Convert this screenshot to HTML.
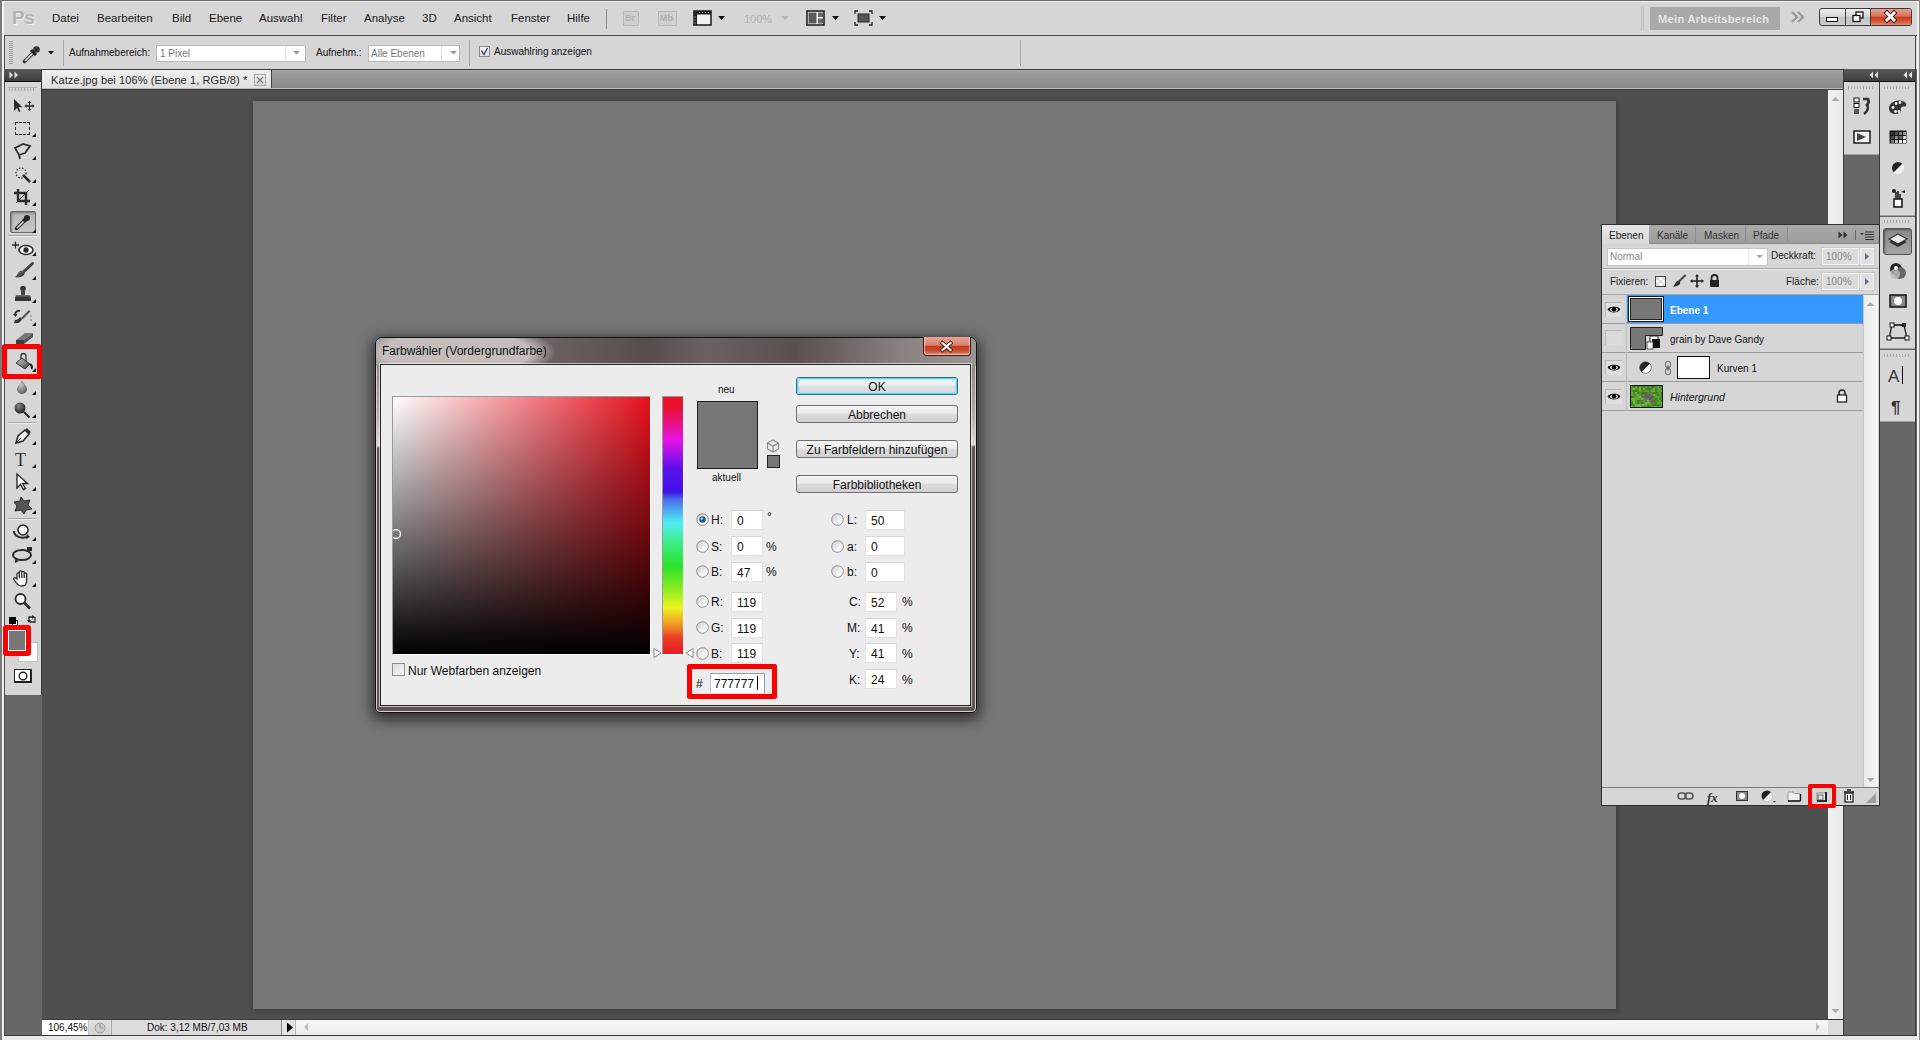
<!DOCTYPE html>
<html><head><meta charset="utf-8">
<style>
*{box-sizing:border-box;margin:0;padding:0}
html,body{width:1920px;height:1040px;overflow:hidden;background:#d6d6d6;font-family:"Liberation Sans",sans-serif;font-size:12px;color:#000}
.a{position:absolute}
.t{position:absolute;white-space:nowrap;line-height:1}
svg{overflow:visible}
</style></head><body>
<div class="a" style="left:0px;top:0px;width:1920px;height:1040px;background:#d6d6d6"></div>
<div class="a" style="left:0px;top:0px;width:1920px;height:1px;background:#6b6b6b"></div>
<div class="a" style="left:0px;top:1px;width:1920px;height:1px;background:#f0f0f0"></div>
<div class="a" style="left:0px;top:0px;width:2px;height:1040px;background:#7b7b7b"></div>
<div class="a" style="left:2px;top:1px;width:2px;height:1039px;background:#f2f2f2"></div>
<div class="a" style="left:1917px;top:1px;width:3px;height:1039px;background:#f0f0f0"></div>
<div class="a" style="left:1919px;top:0px;width:1px;height:1040px;background:#8a8a8a"></div>
<div class="t" style="left:12px;top:8px;font-size:19px;font-weight:bold;color:#b4b4b4;letter-spacing:-0.5px;text-shadow:1px 1px 0 #eee">Ps</div>
<div class="t" style="left:52px;top:13.27px;font-size:11.5px;color:#1a1a1a">Datei</div>
<div class="t" style="left:97px;top:13.27px;font-size:11.5px;color:#1a1a1a">Bearbeiten</div>
<div class="t" style="left:172px;top:13.27px;font-size:11.5px;color:#1a1a1a">Bild</div>
<div class="t" style="left:209px;top:13.27px;font-size:11.5px;color:#1a1a1a">Ebene</div>
<div class="t" style="left:259px;top:13.27px;font-size:11.5px;color:#1a1a1a">Auswahl</div>
<div class="t" style="left:321px;top:13.27px;font-size:11.5px;color:#1a1a1a">Filter</div>
<div class="t" style="left:364px;top:13.27px;font-size:11.5px;color:#1a1a1a">Analyse</div>
<div class="t" style="left:422px;top:13.27px;font-size:11.5px;color:#1a1a1a">3D</div>
<div class="t" style="left:454px;top:13.27px;font-size:11.5px;color:#1a1a1a">Ansicht</div>
<div class="t" style="left:511px;top:13.27px;font-size:11.5px;color:#1a1a1a">Fenster</div>
<div class="t" style="left:567px;top:13.27px;font-size:11.5px;color:#1a1a1a">Hilfe</div>
<div class="a" style="left:606px;top:9px;width:1px;height:20px;background:#8c8c8c"></div>
<div class="a" style="left:623px;top:11px;width:16px;height:15px;border:1px solid #b8b8b8;background:#d0d0d0;border-radius:1px"></div>
<div class="t" style="left:625px;top:14.38px;font-size:9px;color:#b0b0b0;font-weight:bold">Br</div>
<div class="a" style="left:658px;top:11px;width:19px;height:15px;border:1px solid #b8b8b8;background:#d0d0d0"></div>
<div class="t" style="left:660px;top:14.38px;font-size:9px;color:#b0b0b0;font-weight:bold">Mb</div>
<svg class="a" style="left:693px;top:10px;" width="34" height="16" viewBox="0 0 34 16"><rect x="1" y="1" width="17" height="14" fill="#f0f0f0" stroke="#222" stroke-width="1.6"/><rect x="1" y="1" width="17" height="3.5" fill="#222"/><rect x="1" y="1" width="3" height="14" fill="#222"/><path d="M6 2.5h1M9 2.5h1M12 2.5h1M15 2.5h1M2 6.5v1M2 9.5v1M2 12.5v1" stroke="#ddd"/><path d="M25 6h7l-3.5 4z" fill="#111"/></svg>
<div class="t" style="left:744px;top:13.69px;font-size:11px;color:#b0b0b0">100%</div>
<svg class="a" style="left:779px;top:10px;" width="12" height="16" viewBox="0 0 12 16"><path d="M2 6h8l-4 4z" fill="#b4b4b4"/></svg>
<svg class="a" style="left:806px;top:10px;" width="34" height="16" viewBox="0 0 34 16"><rect x="1" y="1" width="17" height="14" fill="#f4f4f4" stroke="#222" stroke-width="1.6"/><rect x="2.5" y="2.5" width="8" height="11" fill="#5a5a5a"/><rect x="12" y="2.5" width="5" height="4.5" fill="#666"/><rect x="12" y="8.5" width="5" height="5" fill="#666"/><path d="M26 6h7l-3.5 4z" fill="#111"/></svg>
<svg class="a" style="left:854px;top:10px;" width="34" height="16" viewBox="0 0 34 16"><path d="M1 4V1h3M15 1h3v3M18 12v3h-3M4 15H1v-3" fill="none" stroke="#222" stroke-width="1.3"/><rect x="4" y="4" width="11" height="8" fill="#555" stroke="#222"/><path d="M25 6h7l-3.5 4z" fill="#111"/></svg>
<div class="a" style="left:1641px;top:7px;width:1px;height:24px;background:#bdbdbd"></div>
<div class="a" style="left:1643px;top:7px;width:1px;height:24px;background:#bdbdbd"></div>
<div class="a" style="left:1650px;top:7px;width:130px;height:23px;background:#a9a9a9;border-radius:1px"></div>
<div class="t" style="left:1658px;top:13.69px;font-size:11px;color:#e6e6e6;font-weight:bold;letter-spacing:0.35px">Mein Arbeitsbereich</div>
<svg class="a" style="left:1790px;top:10px;" width="16" height="14" viewBox="0 0 16 14"><path d="M2 2l5 5-5 5M8 2l5 5-5 5" fill="none" stroke="#9a9a9a" stroke-width="2.2"/></svg>
<div class="a" style="left:1819px;top:8px;width:93px;height:18px;border:1px solid #3a3a3a;border-radius:3px;background:linear-gradient(#eeeeee,#d6d6d6 48%,#c2c2c2 52%,#cdcdcd);overflow:hidden"><div class="a" style="left:50px;top:0;width:42px;height:16px;background:linear-gradient(#e9a092,#d9705c 45%,#c93d1f 52%,#d95a3c 80%,#e58873);border-left:1px solid #3a3a3a"></div><div class="a" style="left:25px;top:0;width:1px;height:16px;background:#3a3a3a"></div></div>
<div class="a" style="left:1826px;top:17px;width:12px;height:5px;border:1.5px solid #111;background:#fff"></div>
<svg class="a" style="left:1851px;top:11px;" width="14" height="12" viewBox="0 0 14 12"><rect x="5" y="1" width="7" height="6" fill="#fff" stroke="#111" stroke-width="1.3"/><rect x="2" y="4.5" width="7" height="6" fill="#fff" stroke="#111" stroke-width="1.3"/></svg>
<svg class="a" style="left:1883px;top:10px;" width="16" height="14" viewBox="0 0 16 14"><path d="M4 3l7 7M11 3l-7 7" stroke="#4a1c14" stroke-width="5" stroke-linecap="square"/><path d="M4 3l7 7M11 3l-7 7" stroke="#fff" stroke-width="3" stroke-linecap="square"/></svg>
<div class="a" style="left:4px;top:35px;width:1913px;height:1px;background:#4a4a4a"></div>
<div class="a" style="left:4px;top:35px;width:1px;height:34px;background:#4a4a4a"></div>
<div class="a" style="left:1915px;top:35px;width:1px;height:34px;background:#4a4a4a"></div>
<div class="a" style="left:5px;top:36px;width:1910px;height:33px;background:#d6d6d6"></div>
<div class="a" style="left:9px;top:41px;width:4px;height:24px;background:repeating-linear-gradient(#9a9a9a 0 1px,transparent 1px 2px)"></div>
<svg class="a" style="left:22px;top:42px;" width="34" height="22" viewBox="0 0 34 22"><path d="M2.5 19.5l9-9" stroke="#333" stroke-width="3.6" stroke-linecap="round"/><path d="M3 19l8.2-8.2" stroke="#eee" stroke-width="1.6"/><path d="M9 8l5 5" stroke="#222" stroke-width="3"/><circle cx="14.5" cy="7.5" r="3.3" fill="#333"/><path d="M26 9h6l-3 3.5z" fill="#111"/></svg>
<div class="a" style="left:63px;top:40px;width:1px;height:26px;background:#a6a6a6"></div>
<div class="t" style="left:69px;top:47.53px;font-size:10px;color:#111">Aufnahmebereich:</div>
<div class="a" style="left:156px;top:45px;width:150px;height:17px;background:#fff;border:1px solid #b9b9b9"></div>
<div class="a" style="left:157px;top:46px;width:129px;height:15px;border-right:1px solid #e2e2e2"></div>
<div class="t" style="left:160px;top:48.53px;font-size:10px;color:#777">1 Pixel</div>
<svg class="a" style="left:292px;top:50px;" width="10" height="6" viewBox="0 0 10 6"><path d="M1 1h7l-3.5 3.5z" fill="#999"/></svg>
<div class="t" style="left:316px;top:47.53px;font-size:10px;color:#111">Aufnehm.:</div>
<div class="a" style="left:368px;top:45px;width:92px;height:17px;background:#fff;border:1px solid #b9b9b9"></div>
<div class="a" style="left:369px;top:46px;width:73px;height:15px;border-right:1px solid #e2e2e2"></div>
<div class="t" style="left:371px;top:48.53px;font-size:10px;color:#777">Alle Ebenen</div>
<svg class="a" style="left:449px;top:50px;" width="10" height="6" viewBox="0 0 10 6"><path d="M1 1h7l-3.5 3.5z" fill="#999"/></svg>
<div class="a" style="left:469px;top:40px;width:1px;height:26px;background:#a6a6a6"></div>
<div class="a" style="left:479px;top:46px;width:11px;height:11px;background:linear-gradient(#f4f4f4,#e0e0e0);border:1px solid #8a8a8a"></div>
<svg class="a" style="left:480px;top:47px;" width="9" height="9" viewBox="0 0 9 9"><path d="M1.5 3.5l2.5 4 3.5-6.5" fill="none" stroke="#2b3a7a" stroke-width="1.3"/></svg>
<div class="t" style="left:494px;top:46.53px;font-size:10px;color:#111">Auswahlring anzeigen</div>
<div class="a" style="left:1020px;top:40px;width:1px;height:26px;background:#a6a6a6"></div>
<div class="a" style="left:4px;top:69px;width:38px;height:626px;background:#d6d6d6;border-left:1px solid #4a4a4a;border-right:1px solid #3a3a3a"></div>
<div class="a" style="left:4px;top:695px;width:38px;height:340px;background:#676767;border-left:1px solid #4a4a4a"></div>
<div class="a" style="left:4px;top:69px;width:37px;height:12px;background:linear-gradient(#5a5a5a,#3e3e3e)"></div>
<div class="a" style="left:4px;top:81px;width:37px;height:1px;background:#0d0d0d"></div>
<svg class="a" style="left:9px;top:71px;" width="14" height="8" viewBox="0 0 14 8"><path d="M0.5 0.5l3.5 3.5-3.5 3.5zM5.5 0.5l3.5 3.5-3.5 3.5z" fill="#e0e0e0"/></svg>
<div class="a" style="left:8px;top:87px;width:29px;height:1px;background:#b0b0b0"></div>
<div class="a" style="left:9px;top:88px;width:26px;height:3px;background:repeating-linear-gradient(90deg,#a6a6a6 0 1px,transparent 1px 3px)"></div>
<div class="a" style="left:42px;top:69px;width:1801px;height:951px;background:#4f4f4f"></div>
<div class="a" style="left:42px;top:69px;width:1801px;height:20px;background:linear-gradient(#a6a6a6,#9a9a9a 30%,#888888)"></div>
<div class="a" style="left:42px;top:69px;width:1801px;height:1px;background:#3d3d3d"></div>
<div class="a" style="left:42px;top:70px;width:230px;height:19px;background:linear-gradient(#f0f0f0,#dedede);border-right:1px solid #3e3e3e"></div>
<div class="t" style="left:51px;top:74.69px;font-size:11px;color:#2b2b2b;letter-spacing:0.1px">Katze.jpg bei 106% (Ebene 1, RGB/8) *</div>
<div class="a" style="left:254px;top:74px;width:12px;height:12px;border:1px solid #aaa;background:linear-gradient(#eee,#d8d8d8)"></div>
<svg class="a" style="left:256px;top:76px;" width="8" height="8" viewBox="0 0 8 8"><path d="M1 1l6 6M7 1l-6 6" stroke="#777" stroke-width="1.2"/></svg>
<div class="a" style="left:42px;top:88px;width:1801px;height:1px;background:#b8b8b8"></div>
<div class="a" style="left:42px;top:89px;width:1801px;height:1px;background:#3a3a3a"></div>
<div class="a" style="left:253px;top:101px;width:1363px;height:908px;background:#777777;box-shadow:2px 2px 0 #434343,4px 4px 0 #474747,1px 1px 6px rgba(0,0,0,0.3)"></div>
<div class="a" style="left:1828px;top:90px;width:15px;height:930px;background:linear-gradient(90deg,#f2f2f2,#e9e9e9)"></div>
<svg class="a" style="left:1831px;top:96px;" width="9" height="6" viewBox="0 0 9 6"><path d="M0.5 5l4-4 4 4z" fill="#a8a8a8"/></svg>
<svg class="a" style="left:1831px;top:1008px;" width="9" height="6" viewBox="0 0 9 6"><path d="M0.5 1l4 4 4-4z" fill="#a8a8a8"/></svg>
<div class="a" style="left:42px;top:1019px;width:1801px;height:1px;background:#3a3a3a"></div>
<div class="a" style="left:42px;top:1020px;width:1801px;height:15px;background:linear-gradient(#f7f7f7,#ebebeb)"></div>
<div class="a" style="left:42px;top:1020px;width:46px;height:15px;background:#fff"></div>
<div class="t" style="left:48px;top:1022.53px;font-size:10px;color:#111">106,45%</div>
<div class="a" style="left:88px;top:1020px;width:24px;height:15px;background:linear-gradient(#e0e0e0,#d4d4d4);border-left:1px solid #c8c8c8;border-right:1px solid #aaa"></div>
<svg class="a" style="left:94px;top:1022px;" width="12" height="12" viewBox="0 0 12 12"><circle cx="6" cy="6" r="5" fill="#cfcfcf" stroke="#9a9a9a"/><path d="M6 2v4h4" fill="none" stroke="#9a9a9a" stroke-width="1.2"/></svg>
<div class="a" style="left:112px;top:1020px;width:170px;height:15px;background:#dcdcdc;border-right:1px solid #8a8a8a"></div>
<div class="t" style="left:147px;top:1022.53px;font-size:10px;color:#111">Dok: 3,12 MB/7,03 MB</div>
<div class="a" style="left:282px;top:1020px;width:14px;height:15px;background:#e4e4e4;border-right:1px solid #bbb"></div>
<svg class="a" style="left:286px;top:1022px;" width="8" height="11" viewBox="0 0 8 11"><path d="M1 0.5l6 5-6 5z" fill="#000"/></svg>
<svg class="a" style="left:302px;top:1022px;" width="8" height="10" viewBox="0 0 8 10"><path d="M6 1l-4 4 4 4z" fill="#bbb"/></svg>
<svg class="a" style="left:1814px;top:1022px;" width="8" height="10" viewBox="0 0 8 10"><path d="M2 1l4 4-4 4z" fill="#bbb"/></svg>
<div class="a" style="left:1828px;top:1020px;width:15px;height:15px;background:#dcdcdc"></div>
<div class="a" style="left:42px;top:1035px;width:1801px;height:1px;background:#3a3a3a"></div>
<div class="a" style="left:4px;top:1035px;width:1913px;height:1px;background:#3a3a3a"></div>
<div class="a" style="left:4px;top:1036px;width:1913px;height:4px;background:#e8e8e8"></div>
<div class="a" style="left:1843px;top:69px;width:74px;height:966px;background:#676767"></div>
<div class="a" style="left:1843px;top:69px;width:1px;height:966px;background:#3a3a3a"></div>
<div class="a" style="left:1844px;top:69px;width:72px;height:12px;background:linear-gradient(#5a5a5a,#3e3e3e)"></div>
<div class="a" style="left:1844px;top:81px;width:72px;height:1px;background:#0d0d0d"></div>
<svg class="a" style="left:1869px;top:71px;" width="10" height="8" viewBox="0 0 10 8"><path d="M4 0.5l-3.5 3.5 3.5 3.5zM9 0.5l-3.5 3.5 3.5 3.5z" fill="#e0e0e0"/></svg>
<svg class="a" style="left:1903px;top:71px;" width="10" height="8" viewBox="0 0 10 8"><path d="M4 0.5l-3.5 3.5 3.5 3.5zM9 0.5l-3.5 3.5 3.5 3.5z" fill="#e0e0e0"/></svg>
<div class="a" style="left:1879px;top:82px;width:1px;height:723px;background:#3a3a3a"></div>
<div class="a" style="left:1915px;top:69px;width:1px;height:966px;background:#3a3a3a"></div>
<div class="a" style="left:1844px;top:82px;width:35px;height:73px;background:#d6d6d6;border-bottom:1px solid #a0a0a0"></div>
<div class="a" style="left:1880px;top:82px;width:35px;height:134px;background:#d6d6d6;border-bottom:1px solid #a0a0a0"></div>
<div class="a" style="left:1880px;top:217px;width:35px;height:132px;background:#d6d6d6;border-bottom:1px solid #a0a0a0"></div>
<div class="a" style="left:1880px;top:350px;width:35px;height:72px;background:#d6d6d6;border-bottom:1px solid #a0a0a0"></div>
<div class="a" style="left:1848px;top:86px;width:27px;height:3px;background:repeating-linear-gradient(90deg,#a6a6a6 0 1px,transparent 1px 3px)"></div>
<div class="a" style="left:1884px;top:86px;width:27px;height:3px;background:repeating-linear-gradient(90deg,#a6a6a6 0 1px,transparent 1px 3px)"></div>
<div class="a" style="left:1884px;top:220px;width:27px;height:3px;background:repeating-linear-gradient(90deg,#a6a6a6 0 1px,transparent 1px 3px)"></div>
<div class="a" style="left:1884px;top:354px;width:27px;height:3px;background:repeating-linear-gradient(90deg,#a6a6a6 0 1px,transparent 1px 3px)"></div>
<div class="a" style="left:1601px;top:224px;width:279px;height:582px;background:#d6d6d6;border:1px solid #2e2e2e"></div>
<div class="a" style="left:1602px;top:225px;width:277px;height:19px;background:linear-gradient(#a9a9a9,#9c9c9c)"></div>
<div class="a" style="left:1602px;top:243px;width:277px;height:1px;background:#8a8a8a"></div>
<div class="a" style="left:1602px;top:225px;width:47px;height:19px;background:linear-gradient(#e6e6e6,#dadada)"></div>
<div class="t" style="left:1609px;top:230.53px;font-size:10px;color:#222">Ebenen</div>
<div class="t" style="left:1657px;top:230.53px;font-size:10px;color:#333">Kanäle</div>
<div class="a" style="left:1695px;top:227px;width:1px;height:15px;background:#8e8e8e"></div>
<div class="t" style="left:1704px;top:230.53px;font-size:10px;color:#333">Masken</div>
<div class="a" style="left:1745px;top:227px;width:1px;height:15px;background:#8e8e8e"></div>
<div class="t" style="left:1753px;top:230.53px;font-size:10px;color:#333">Pfade</div>
<div class="a" style="left:1787px;top:227px;width:1px;height:15px;background:#8e8e8e"></div>
<svg class="a" style="left:1838px;top:231px;" width="11" height="8" viewBox="0 0 11 8"><path d="M0.5 0.5l4 3.5-4 3.5zM5.5 0.5l4 3.5-4 3.5z" fill="#333"/></svg>
<div class="a" style="left:1855px;top:230px;width:1px;height:10px;background:#666"></div>
<svg class="a" style="left:1859px;top:230px;" width="16" height="10" viewBox="0 0 16 10"><path d="M1 3h4l-2 2.5z" fill="#444"/><path d="M6 2h9M6 4.5h9M6 7h9M6 9.5h9" stroke="#333" stroke-width="1"/></svg>
<div class="a" style="left:1607px;top:248px;width:161px;height:18px;background:#fff;border:1px solid #c4c4c4"></div>
<div class="a" style="left:1608px;top:249px;width:141px;height:16px;border-right:1px solid #e6e6e6"></div>
<div class="t" style="left:1610px;top:251.53px;font-size:10px;color:#888">Normal</div>
<svg class="a" style="left:1755px;top:254px;" width="10" height="6" viewBox="0 0 10 6"><path d="M1 1h7l-3.5 3.5z" fill="#aaa"/></svg>
<div class="t" style="left:1771px;top:250.53px;font-size:10px;color:#222">Deckkraft:</div>
<div class="a" style="left:1822px;top:248px;width:37px;height:17px;background:#dcdcdc;border:1px solid #f4f4f4;outline:1px solid #c8c8c8"></div>
<div class="t" style="left:1826px;top:251.53px;font-size:10px;color:#888">100%</div>
<div class="a" style="left:1860px;top:248px;width:14px;height:17px;background:#e0e0e0;border:1px solid #f4f4f4;outline:1px solid #c8c8c8"></div>
<svg class="a" style="left:1863px;top:252px;" width="8" height="9" viewBox="0 0 8 9"><path d="M2 1l4 3.5-4 3.5z" fill="#6a6a8a"/></svg>
<div class="a" style="left:1602px;top:268px;width:277px;height:1px;background:#a8a8a8"></div>
<div class="a" style="left:1602px;top:269px;width:277px;height:1px;background:#ececec"></div>
<div class="t" style="left:1610px;top:276.54px;font-size:10px;color:#222">Fixieren:</div>
<div class="a" style="left:1655px;top:276px;width:11px;height:11px;border:1px solid #444;background:conic-gradient(#fff 25%,#ddd 0 50%,#fff 0 75%,#ddd 0) 0 0/6px 6px"></div>
<svg class="a" style="left:1672px;top:274px;" width="14" height="14" viewBox="0 0 14 14"><path d="M13 1.5l-6 6" stroke="#444" stroke-width="2" stroke-linecap="round"/><path d="M7 7c1.5 1 1.5 2.5 0.5 3.5-1.5 1.5-4.5 2.5-6.5 2 1-1 1.5-2 2.5-3.5 1-1.5 2.5-2.5 3.5-2z" fill="#333"/></svg>
<svg class="a" style="left:1690px;top:274px;" width="14" height="14" viewBox="0 0 14 14"><path d="M7 1v12M1 7h12" stroke="#222" stroke-width="1.6"/><path d="M7 0l-2 2.5h4zM7 14l-2-2.5h4zM0 7l2.5-2v4zM14 7l-2.5-2v4z" fill="#222"/></svg>
<svg class="a" style="left:1709px;top:274px;" width="11" height="13" viewBox="0 0 11 13"><path d="M2.5 6V4a3 3 0 0 1 6 0v2" fill="none" stroke="#222" stroke-width="1.8"/><rect x="1" y="6" width="9" height="7" fill="#222"/></svg>
<div class="t" style="left:1786px;top:276.54px;font-size:10px;color:#222">Fläche:</div>
<div class="a" style="left:1822px;top:273px;width:37px;height:17px;background:#dcdcdc;border:1px solid #f4f4f4;outline:1px solid #c8c8c8"></div>
<div class="t" style="left:1826px;top:276.54px;font-size:10px;color:#888">100%</div>
<div class="a" style="left:1860px;top:273px;width:14px;height:17px;background:#e0e0e0;border:1px solid #f4f4f4;outline:1px solid #c8c8c8"></div>
<svg class="a" style="left:1863px;top:277px;" width="8" height="9" viewBox="0 0 8 9"><path d="M2 1l4 3.5-4 3.5z" fill="#6a6a8a"/></svg>
<div class="a" style="left:1602px;top:294px;width:277px;height:1px;background:#a8a8a8"></div>
<div class="a" style="left:1602px;top:295px;width:261px;height:493px;background:#d6d6d6"></div>
<div class="a" style="left:1602px;top:323px;width:261px;height:1px;background:#9c9c9c"></div>
<div class="a" style="left:1602px;top:352px;width:261px;height:1px;background:#9c9c9c"></div>
<div class="a" style="left:1602px;top:381px;width:261px;height:1px;background:#9c9c9c"></div>
<div class="a" style="left:1602px;top:410px;width:261px;height:1px;background:#9c9c9c"></div>
<div class="a" style="left:1626px;top:295px;width:1px;height:116px;background:#bcbcbc"></div>
<div class="a" style="left:1627px;top:295px;width:236px;height:28px;background:#3399ff"></div>
<div class="a" style="left:1605px;top:302px;width:17px;height:15px;border-top:1px solid #b8b8b8;border-left:1px solid #b8b8b8;background:#dedede"></div>
<svg class="a" style="left:1607px;top:305px;" width="14" height="9" viewBox="0 0 14 9"><path d="M0.5 4.5C3 0.5 11 0.5 13.5 4.5C11 8.5 3 8.5 0.5 4.5z" fill="#111"/><ellipse cx="7" cy="4.3" rx="3.8" ry="2.6" fill="#fff"/><circle cx="7" cy="4.5" r="2.3" fill="#000"/><path d="M1 4.5C3.5 1.8 10.5 1.8 13 4.5" stroke="#111" fill="none"/></svg>
<div class="a" style="left:1628px;top:296px;width:36px;height:26px;background:#fff;border:1px solid #0a1a30"></div>
<div class="a" style="left:1630px;top:298px;width:32px;height:22px;background:#777;border:1px solid #222"></div>
<div class="t" style="left:1670px;top:305.54px;font-size:10px;color:#fff;font-weight:bold">Ebene 1</div>
<div class="a" style="left:1605px;top:330px;width:17px;height:15px;border-top:1px solid #b8b8b8;border-left:1px solid #b8b8b8;background:#dadada"></div>
<svg class="a" style="left:1630px;top:327px;" width="34" height="23" viewBox="0 0 34 23"><path d="M0.5 0.5h32v8h-17v14h-15z" fill="#777" stroke="#222"/><rect x="20" y="9" width="8" height="11" fill="#fff" stroke="#222"/><rect x="22" y="12" width="8" height="9" fill="#111"/><rect x="17" y="15" width="6" height="7" fill="#fff" stroke="#333" stroke-width="0.8"/></svg>
<div class="t" style="left:1670px;top:334.54px;font-size:10px;color:#111">grain by Dave Gandy</div>
<div class="a" style="left:1605px;top:360px;width:17px;height:15px;border-top:1px solid #b8b8b8;border-left:1px solid #b8b8b8;background:#dedede"></div>
<svg class="a" style="left:1607px;top:363px;" width="14" height="9" viewBox="0 0 14 9"><path d="M0.5 4.5C3 0.5 11 0.5 13.5 4.5C11 8.5 3 8.5 0.5 4.5z" fill="#111"/><ellipse cx="7" cy="4.3" rx="3.8" ry="2.6" fill="#fff"/><circle cx="7" cy="4.5" r="2.3" fill="#000"/><path d="M1 4.5C3.5 1.8 10.5 1.8 13 4.5" stroke="#111" fill="none"/></svg>
<svg class="a" style="left:1639px;top:361px;" width="13" height="13" viewBox="0 0 13 13"><circle cx="6.5" cy="6.5" r="5.8" fill="#222"/><path d="M11 2.5L2.5 11A5.8 5.8 0 0 0 11 2.5z" fill="#fff"/><circle cx="6.5" cy="6.5" r="5.8" fill="none" stroke="#555" stroke-width="0.8"/></svg>
<svg class="a" style="left:1664px;top:361px;" width="8" height="14" viewBox="0 0 8 14"><rect x="1.5" y="0.5" width="5" height="6" rx="2" fill="none" stroke="#555"/><rect x="1.5" y="7.5" width="5" height="6" rx="2" fill="none" stroke="#555"/><path d="M4 4v6" stroke="#555"/></svg>
<div class="a" style="left:1677px;top:356px;width:33px;height:23px;background:#fff;border:1px solid #111"></div>
<div class="t" style="left:1717px;top:363.54px;font-size:10px;color:#111">Kurven 1</div>
<div class="a" style="left:1605px;top:389px;width:17px;height:15px;border-top:1px solid #b8b8b8;border-left:1px solid #b8b8b8;background:#dedede"></div>
<svg class="a" style="left:1607px;top:392px;" width="14" height="9" viewBox="0 0 14 9"><path d="M0.5 4.5C3 0.5 11 0.5 13.5 4.5C11 8.5 3 8.5 0.5 4.5z" fill="#111"/><ellipse cx="7" cy="4.3" rx="3.8" ry="2.6" fill="#fff"/><circle cx="7" cy="4.5" r="2.3" fill="#000"/><path d="M1 4.5C3.5 1.8 10.5 1.8 13 4.5" stroke="#111" fill="none"/></svg>
<div class="a" style="left:1630px;top:385px;width:33px;height:23px;border:1px solid #111;overflow:hidden"><svg style="position:absolute;left:0;top:0" width="31" height="21"><rect x="0" y="0" width="2" height="2" fill="rgb(76,142,39)"/><rect x="2" y="0" width="2" height="2" fill="rgb(67,130,34)"/><rect x="4" y="0" width="2" height="2" fill="rgb(92,165,49)"/><rect x="6" y="0" width="2" height="2" fill="rgb(63,125,32)"/><rect x="8" y="0" width="2" height="2" fill="rgb(86,157,46)"/><rect x="10" y="0" width="2" height="2" fill="rgb(78,145,40)"/><rect x="12" y="0" width="2" height="2" fill="rgb(62,124,31)"/><rect x="14" y="0" width="2" height="2" fill="rgb(85,155,45)"/><rect x="16" y="0" width="2" height="2" fill="rgb(61,122,31)"/><rect x="18" y="0" width="2" height="2" fill="rgb(81,150,43)"/><rect x="20" y="0" width="2" height="2" fill="rgb(63,124,32)"/><rect x="22" y="0" width="2" height="2" fill="rgb(64,126,32)"/><rect x="24" y="0" width="2" height="2" fill="rgb(81,149,42)"/><rect x="26" y="0" width="2" height="2" fill="rgb(101,177,54)"/><rect x="28" y="0" width="2" height="2" fill="rgb(66,128,33)"/><rect x="30" y="0" width="2" height="2" fill="rgb(71,135,36)"/><rect x="0" y="2" width="2" height="2" fill="rgb(91,163,48)"/><rect x="2" y="2" width="2" height="2" fill="rgb(107,186,58)"/><rect x="4" y="2" width="2" height="2" fill="rgb(88,160,47)"/><rect x="6" y="2" width="2" height="2" fill="rgb(79,147,41)"/><rect x="8" y="2" width="2" height="2" fill="rgb(108,188,59)"/><rect x="10" y="2" width="2" height="2" fill="rgb(62,123,31)"/><rect x="12" y="2" width="2" height="2" fill="rgb(102,180,55)"/><rect x="14" y="2" width="2" height="2" fill="rgb(74,140,38)"/><rect x="16" y="2" width="2" height="2" fill="rgb(67,130,34)"/><rect x="18" y="2" width="2" height="2" fill="rgb(65,128,33)"/><rect x="20" y="2" width="2" height="2" fill="rgb(75,141,39)"/><rect x="22" y="2" width="2" height="2" fill="rgb(100,177,54)"/><rect x="24" y="2" width="2" height="2" fill="rgb(69,132,35)"/><rect x="26" y="2" width="2" height="2" fill="rgb(89,160,47)"/><rect x="28" y="2" width="2" height="2" fill="rgb(91,164,49)"/><rect x="30" y="2" width="2" height="2" fill="rgb(78,146,41)"/><rect x="0" y="4" width="2" height="2" fill="rgb(87,158,46)"/><rect x="2" y="4" width="2" height="2" fill="rgb(63,124,31)"/><rect x="4" y="4" width="2" height="2" fill="rgb(62,124,31)"/><rect x="6" y="4" width="2" height="2" fill="rgb(70,134,36)"/><rect x="8" y="4" width="2" height="2" fill="rgb(94,167,50)"/><rect x="10" y="4" width="2" height="2" fill="rgb(81,149,42)"/><rect x="12" y="4" width="2" height="2" fill="rgb(75,141,39)"/><rect x="14" y="4" width="2" height="2" fill="rgb(89,160,47)"/><rect x="16" y="4" width="2" height="2" fill="rgb(82,151,43)"/><rect x="18" y="4" width="2" height="2" fill="rgb(74,140,38)"/><rect x="20" y="4" width="2" height="2" fill="rgb(99,175,53)"/><rect x="22" y="4" width="2" height="2" fill="rgb(94,168,50)"/><rect x="24" y="4" width="2" height="2" fill="rgb(72,137,37)"/><rect x="26" y="4" width="2" height="2" fill="rgb(88,160,47)"/><rect x="28" y="4" width="2" height="2" fill="rgb(86,156,45)"/><rect x="30" y="4" width="2" height="2" fill="rgb(103,181,56)"/><rect x="0" y="6" width="2" height="2" fill="rgb(96,171,51)"/><rect x="2" y="6" width="2" height="2" fill="rgb(74,140,38)"/><rect x="4" y="6" width="2" height="2" fill="rgb(109,188,59)"/><rect x="6" y="6" width="2" height="2" fill="rgb(65,128,33)"/><rect x="8" y="6" width="2" height="2" fill="rgb(80,149,42)"/><rect x="10" y="6" width="2" height="2" fill="rgb(67,130,34)"/><rect x="12" y="6" width="2" height="2" fill="rgb(97,89,83)"/><rect x="14" y="6" width="2" height="2" fill="rgb(63,125,32)"/><rect x="16" y="6" width="2" height="2" fill="rgb(115,107,101)"/><rect x="18" y="6" width="2" height="2" fill="rgb(117,109,103)"/><rect x="20" y="6" width="2" height="2" fill="rgb(124,116,110)"/><rect x="22" y="6" width="2" height="2" fill="rgb(63,124,32)"/><rect x="24" y="6" width="2" height="2" fill="rgb(64,126,32)"/><rect x="26" y="6" width="2" height="2" fill="rgb(73,138,38)"/><rect x="28" y="6" width="2" height="2" fill="rgb(94,168,50)"/><rect x="30" y="6" width="2" height="2" fill="rgb(63,124,31)"/><rect x="0" y="8" width="2" height="2" fill="rgb(96,171,51)"/><rect x="2" y="8" width="2" height="2" fill="rgb(75,141,39)"/><rect x="4" y="8" width="2" height="2" fill="rgb(88,160,47)"/><rect x="6" y="8" width="2" height="2" fill="rgb(94,167,50)"/><rect x="8" y="8" width="2" height="2" fill="rgb(82,151,43)"/><rect x="10" y="8" width="2" height="2" fill="rgb(117,109,103)"/><rect x="12" y="8" width="2" height="2" fill="rgb(124,116,110)"/><rect x="14" y="8" width="2" height="2" fill="rgb(102,94,88)"/><rect x="16" y="8" width="2" height="2" fill="rgb(108,100,94)"/><rect x="18" y="8" width="2" height="2" fill="rgb(66,129,33)"/><rect x="20" y="8" width="2" height="2" fill="rgb(120,112,106)"/><rect x="22" y="8" width="2" height="2" fill="rgb(105,184,57)"/><rect x="24" y="8" width="2" height="2" fill="rgb(84,154,44)"/><rect x="26" y="8" width="2" height="2" fill="rgb(68,131,34)"/><rect x="28" y="8" width="2" height="2" fill="rgb(80,148,42)"/><rect x="30" y="8" width="2" height="2" fill="rgb(73,139,38)"/><rect x="0" y="10" width="2" height="2" fill="rgb(66,129,34)"/><rect x="2" y="10" width="2" height="2" fill="rgb(81,150,42)"/><rect x="4" y="10" width="2" height="2" fill="rgb(87,158,46)"/><rect x="6" y="10" width="2" height="2" fill="rgb(95,169,51)"/><rect x="8" y="10" width="2" height="2" fill="rgb(109,189,59)"/><rect x="10" y="10" width="2" height="2" fill="rgb(119,111,105)"/><rect x="12" y="10" width="2" height="2" fill="rgb(67,130,34)"/><rect x="14" y="10" width="2" height="2" fill="rgb(109,101,95)"/><rect x="16" y="10" width="2" height="2" fill="rgb(95,87,81)"/><rect x="18" y="10" width="2" height="2" fill="rgb(106,98,92)"/><rect x="20" y="10" width="2" height="2" fill="rgb(95,87,81)"/><rect x="22" y="10" width="2" height="2" fill="rgb(67,130,34)"/><rect x="24" y="10" width="2" height="2" fill="rgb(86,157,46)"/><rect x="26" y="10" width="2" height="2" fill="rgb(90,162,48)"/><rect x="28" y="10" width="2" height="2" fill="rgb(75,142,39)"/><rect x="30" y="10" width="2" height="2" fill="rgb(66,128,33)"/><rect x="0" y="12" width="2" height="2" fill="rgb(102,180,55)"/><rect x="2" y="12" width="2" height="2" fill="rgb(107,186,58)"/><rect x="4" y="12" width="2" height="2" fill="rgb(92,165,49)"/><rect x="6" y="12" width="2" height="2" fill="rgb(96,171,52)"/><rect x="8" y="12" width="2" height="2" fill="rgb(82,151,43)"/><rect x="10" y="12" width="2" height="2" fill="rgb(107,186,58)"/><rect x="12" y="12" width="2" height="2" fill="rgb(130,122,116)"/><rect x="14" y="12" width="2" height="2" fill="rgb(120,112,106)"/><rect x="16" y="12" width="2" height="2" fill="rgb(125,117,111)"/><rect x="18" y="12" width="2" height="2" fill="rgb(98,90,84)"/><rect x="20" y="12" width="2" height="2" fill="rgb(108,100,94)"/><rect x="22" y="12" width="2" height="2" fill="rgb(82,150,43)"/><rect x="24" y="12" width="2" height="2" fill="rgb(65,127,33)"/><rect x="26" y="12" width="2" height="2" fill="rgb(90,162,48)"/><rect x="28" y="12" width="2" height="2" fill="rgb(65,127,33)"/><rect x="30" y="12" width="2" height="2" fill="rgb(88,159,47)"/><rect x="0" y="14" width="2" height="2" fill="rgb(86,157,46)"/><rect x="2" y="14" width="2" height="2" fill="rgb(107,186,58)"/><rect x="4" y="14" width="2" height="2" fill="rgb(90,162,48)"/><rect x="6" y="14" width="2" height="2" fill="rgb(63,124,32)"/><rect x="8" y="14" width="2" height="2" fill="rgb(70,134,36)"/><rect x="10" y="14" width="2" height="2" fill="rgb(111,103,97)"/><rect x="12" y="14" width="2" height="2" fill="rgb(90,162,48)"/><rect x="14" y="14" width="2" height="2" fill="rgb(102,94,88)"/><rect x="16" y="14" width="2" height="2" fill="rgb(109,189,59)"/><rect x="18" y="14" width="2" height="2" fill="rgb(125,117,111)"/><rect x="20" y="14" width="2" height="2" fill="rgb(104,96,90)"/><rect x="22" y="14" width="2" height="2" fill="rgb(65,127,33)"/><rect x="24" y="14" width="2" height="2" fill="rgb(77,143,40)"/><rect x="26" y="14" width="2" height="2" fill="rgb(73,138,37)"/><rect x="28" y="14" width="2" height="2" fill="rgb(101,178,54)"/><rect x="30" y="14" width="2" height="2" fill="rgb(68,131,34)"/><rect x="0" y="16" width="2" height="2" fill="rgb(61,121,30)"/><rect x="2" y="16" width="2" height="2" fill="rgb(107,186,58)"/><rect x="4" y="16" width="2" height="2" fill="rgb(86,156,45)"/><rect x="6" y="16" width="2" height="2" fill="rgb(67,130,34)"/><rect x="8" y="16" width="2" height="2" fill="rgb(87,158,46)"/><rect x="10" y="16" width="2" height="2" fill="rgb(61,121,30)"/><rect x="12" y="16" width="2" height="2" fill="rgb(86,156,45)"/><rect x="14" y="16" width="2" height="2" fill="rgb(108,188,59)"/><rect x="16" y="16" width="2" height="2" fill="rgb(103,180,55)"/><rect x="18" y="16" width="2" height="2" fill="rgb(94,168,50)"/><rect x="20" y="16" width="2" height="2" fill="rgb(73,138,37)"/><rect x="22" y="16" width="2" height="2" fill="rgb(78,145,41)"/><rect x="24" y="16" width="2" height="2" fill="rgb(68,131,35)"/><rect x="26" y="16" width="2" height="2" fill="rgb(98,174,53)"/><rect x="28" y="16" width="2" height="2" fill="rgb(86,157,45)"/><rect x="30" y="16" width="2" height="2" fill="rgb(98,174,53)"/><rect x="0" y="18" width="2" height="2" fill="rgb(76,143,39)"/><rect x="2" y="18" width="2" height="2" fill="rgb(71,135,36)"/><rect x="4" y="18" width="2" height="2" fill="rgb(100,176,54)"/><rect x="6" y="18" width="2" height="2" fill="rgb(109,188,59)"/><rect x="8" y="18" width="2" height="2" fill="rgb(102,179,55)"/><rect x="10" y="18" width="2" height="2" fill="rgb(100,176,54)"/><rect x="12" y="18" width="2" height="2" fill="rgb(100,177,54)"/><rect x="14" y="18" width="2" height="2" fill="rgb(96,171,52)"/><rect x="16" y="18" width="2" height="2" fill="rgb(71,135,36)"/><rect x="18" y="18" width="2" height="2" fill="rgb(85,156,45)"/><rect x="20" y="18" width="2" height="2" fill="rgb(77,144,40)"/><rect x="22" y="18" width="2" height="2" fill="rgb(61,122,30)"/><rect x="24" y="18" width="2" height="2" fill="rgb(61,121,30)"/><rect x="26" y="18" width="2" height="2" fill="rgb(73,139,38)"/><rect x="28" y="18" width="2" height="2" fill="rgb(72,138,37)"/><rect x="30" y="18" width="2" height="2" fill="rgb(94,168,50)"/><rect x="0" y="20" width="2" height="2" fill="rgb(107,186,58)"/><rect x="2" y="20" width="2" height="2" fill="rgb(82,151,43)"/><rect x="4" y="20" width="2" height="2" fill="rgb(106,185,58)"/><rect x="6" y="20" width="2" height="2" fill="rgb(109,189,59)"/><rect x="8" y="20" width="2" height="2" fill="rgb(107,186,58)"/><rect x="10" y="20" width="2" height="2" fill="rgb(78,145,40)"/><rect x="12" y="20" width="2" height="2" fill="rgb(71,135,36)"/><rect x="14" y="20" width="2" height="2" fill="rgb(71,135,36)"/><rect x="16" y="20" width="2" height="2" fill="rgb(69,133,35)"/><rect x="18" y="20" width="2" height="2" fill="rgb(70,134,36)"/><rect x="20" y="20" width="2" height="2" fill="rgb(91,163,48)"/><rect x="22" y="20" width="2" height="2" fill="rgb(105,183,57)"/><rect x="24" y="20" width="2" height="2" fill="rgb(102,178,55)"/><rect x="26" y="20" width="2" height="2" fill="rgb(83,153,44)"/><rect x="28" y="20" width="2" height="2" fill="rgb(92,165,49)"/><rect x="30" y="20" width="2" height="2" fill="rgb(99,175,53)"/></svg></div>
<div class="t" style="left:1670px;top:392.11px;font-size:10.5px;color:#111;font-style:italic">Hintergrund</div>
<svg class="a" style="left:1836px;top:389px;" width="12" height="14" viewBox="0 0 12 14"><path d="M3 6V4a3 3 0 0 1 6 0v2" fill="none" stroke="#222" stroke-width="1.5"/><rect x="1.5" y="6" width="9" height="7" fill="#fff" stroke="#222" stroke-width="1.3"/></svg>
<div class="a" style="left:1863px;top:295px;width:15px;height:493px;background:linear-gradient(90deg,#ececec,#f4f4f4);border-left:1px solid #c8c8c8"></div>
<svg class="a" style="left:1866px;top:301px;" width="9" height="6" viewBox="0 0 9 6"><path d="M0.5 5l4-4 4 4z" fill="#aaa"/></svg>
<svg class="a" style="left:1866px;top:777px;" width="9" height="6" viewBox="0 0 9 6"><path d="M0.5 1l4 4 4-4z" fill="#aaa"/></svg>
<div class="a" style="left:1602px;top:787px;width:277px;height:1px;background:#7c7c7c"></div>
<div class="a" style="left:1602px;top:788px;width:277px;height:17px;background:#d6d6d6"></div>
<svg class="a" style="left:1677px;top:791px;" width="18" height="10" viewBox="0 0 18 10"><rect x="1" y="2" width="8" height="6" rx="3" fill="none" stroke="#555" stroke-width="1.6"/><rect x="8" y="2" width="8" height="6" rx="3" fill="none" stroke="#555" stroke-width="1.6"/></svg>
<div class="t" style="left:1707px;top:791.00px;font-size:13px;color:#333;font-family:'Liberation Serif'"><i><b>fx</b></i></div>
<div class="a" style="left:1736px;top:791px;width:12px;height:10px;background:#888;border:1px solid #333"></div>
<div class="a" style="left:1739px;top:793px;width:6px;height:6px;background:#fff;border-radius:50%"></div>
<svg class="a" style="left:1761px;top:790px;" width="15" height="13" viewBox="0 0 15 13"><circle cx="6" cy="6" r="5.5" fill="#222"/><path d="M10 2L2 10A5.5 5.5 0 0 0 10 2z" fill="#eee"/><path d="M12 11h3l-1.5 1.5z" fill="#222"/></svg>
<svg class="a" style="left:1787px;top:791px;" width="14" height="11" viewBox="0 0 14 11"><path d="M1 1h5l1 1.5h6v7.5h-12z" fill="#f0f0f0" stroke="#999"/><path d="M1 10h12.5" stroke="#111" stroke-width="1.5"/><path d="M13.5 3v7" stroke="#111" stroke-width="1.3"/></svg>
<div class="a" style="left:1808px;top:784px;width:28px;height:24px;border:4px solid #f00;border-radius:2px"></div>
<svg class="a" style="left:1816px;top:791px;" width="12" height="11" viewBox="0 0 12 11"><rect x="1" y="2" width="9" height="8" fill="#f0f0f0" stroke="#888"/><path d="M1 10h10M10 1v9" stroke="#000" stroke-width="1.6"/><rect x="2" y="4" width="5" height="5" fill="#ddd" stroke="#333" stroke-width="0.7"/></svg>
<svg class="a" style="left:1843px;top:789px;" width="12" height="14" viewBox="0 0 12 14"><rect x="2" y="4" width="8" height="9" fill="#f4f4f4" stroke="#222" stroke-width="1.3"/><path d="M1 3h10M4 1h4" stroke="#222" stroke-width="1.5"/><path d="M4.5 6v5M7.5 6v5" stroke="#222"/></svg>
<div class="a" style="left:1866px;top:793px;width:10px;height:10px;background:radial-gradient(circle,#999 0.7px,transparent 0.8px) 0 0/2px 2px;clip-path:polygon(100% 0,100% 100%,0 100%)"></div>
<div class="a" style="left:375px;top:337px;width:602px;height:376px;border-radius:7px 7px 5px 5px;box-shadow:0 4px 14px 3px rgba(0,0,0,0.6)"></div>
<div class="a" style="left:375px;top:337px;width:602px;height:376px;border-radius:7px 7px 5px 5px;background:#5f5654;border:1px solid #141010;overflow:hidden"><div class="a" style="left:0;top:0;width:100%;height:100%;border:1px solid rgba(255,250,250,0.75);border-radius:6px 6px 4px 4px"></div><div class="a" style="left:0;top:0;width:100%;height:28px;background:linear-gradient(90deg,#8f8887 0,#6a605e 30%,#574d4b 45%,#6b6160 55%,#5a504e 70%,#8a8381 88%,#9a9492 100%)"></div><div class="a" style="left:-20px;top:-14px;width:200px;height:56px;background:radial-gradient(closest-side,rgba(200,193,191,0.95) 74%,rgba(190,182,180,0) 100%)"></div><div class="a" style="left:1px;top:27px;width:5px;height:83px;background:linear-gradient(#8e8684,#b0aaa8 60%,#dcd8d6 97%,#6a5f5e 100%)"></div><div class="a" style="right:1px;top:27px;width:5px;height:82px;background:linear-gradient(#8e8684,#b0aaa8 60%,#dcd8d6 97%,#6a5f5e 100%)"></div></div>
<div class="t" style="left:382px;top:344.84px;font-size:12px;color:#111">Farbwähler (Vordergrundfarbe)</div>
<div class="a" style="left:923px;top:337px;width:48px;height:19px;border:1px solid #3a1b16;border-top:none;border-radius:0 0 4px 4px;background:linear-gradient(#e8a393,#d98270 45%,#c53a20 52%,#c84a2c 75%,#e0917c)"><div class="a" style="left:0;top:0;width:100%;height:100%;border:1px solid rgba(255,220,210,0.6);border-top:none;border-radius:0 0 3px 3px"></div></div>
<svg class="a" style="left:940px;top:341px;" width="13" height="11" viewBox="0 0 13 11"><path d="M2.5 2l8 7M10.5 2l-8 7" stroke="#3b1c16" stroke-width="4" stroke-linecap="square"/><path d="M2.5 2l8 7M10.5 2l-8 7" stroke="#fff" stroke-width="2.3" stroke-linecap="square"/></svg>
<div class="a" style="left:380px;top:364px;width:591px;height:342px;background:#ececec;border:1px solid #2a2626;outline:1px solid rgba(255,255,255,0.6)"></div>
<div class="a" style="left:392px;top:396px;width:259px;height:259px;border:1px solid #9a9a9a;border-right-color:#fff;border-bottom-color:#fff"></div>
<div class="a" style="left:393px;top:397px;width:257px;height:257px;overflow:hidden;background:linear-gradient(to bottom,rgba(0,0,0,0),#000),linear-gradient(to right,#fff,#e8101c)"><svg style="position:absolute;left:-3px;top:131px" width="12" height="12"><circle cx="6" cy="6" r="4.5" fill="none" stroke="#fff" stroke-width="1.5"/><circle cx="6" cy="6" r="5.6" fill="none" stroke="#777" stroke-width="0.8"/></svg></div>
<div class="a" style="left:662px;top:396px;width:22px;height:259px;border:1px solid #9a9a9a;border-right-color:#fff;border-bottom-color:#fff"></div>
<div class="a" style="left:663px;top:397px;width:20px;height:257px;background:linear-gradient(#ea1426 0,#ea1030 4%,#e412e8 17%,#5a10ea 28%,#3c14e8 37%,#4a70ee 40%,#50eef2 49%,#3cec80 57%,#2ae22a 66%,#9cee20 76%,#ecf420 82%,#f0a024 88%,#ea3a22 94%,#ea1a24 100%)"></div>
<svg class="a" style="left:653px;top:647px;" width="10" height="12" viewBox="0 0 10 12"><path d="M1 1.5l7 4.5-7 4.5z" fill="#fff" stroke="#888"/></svg>
<svg class="a" style="left:684px;top:647px;" width="10" height="12" viewBox="0 0 10 12"><path d="M9 1.5l-7 4.5 7 4.5z" fill="#fff" stroke="#888"/></svg>
<div class="t" style="left:718px;top:384.54px;font-size:10px;color:#111">neu</div>
<div class="a" style="left:697px;top:401px;width:61px;height:68px;background:#777;border:1px solid #1e1e1e"></div>
<div class="t" style="left:712px;top:472.54px;font-size:10px;color:#111">aktuell</div>
<svg class="a" style="left:766px;top:439px;" width="14" height="14" viewBox="0 0 14 14"><path d="M7 1l5.5 3v6L7 13 1.5 10V4z" fill="#ececec" stroke="#888" stroke-width="1.1"/><path d="M1.5 4L7 7l5.5-3M7 7v6" fill="none" stroke="#888" stroke-width="1.1"/></svg>
<div class="a" style="left:767px;top:455px;width:13px;height:13px;background:#777;border:1px solid #222"></div>
<div class="a" style="left:796px;top:377px;width:162px;height:18px;border:1px solid #2c6f86;border-radius:3px;background:linear-gradient(#f4f6f7,#eaedef 45%,#dde1e4 50%,#d4dadd)"><div class="a" style="left:0;top:0;right:0;bottom:0;border:1px solid #5fd4ee;border-radius:2px;box-shadow:inset 0 0 1px 1px rgba(120,225,245,0.5)"></div></div>
<div class="t" style="left:796px;width:162px;text-align:center;top:380.84px;font-size:12px;color:#111">OK</div>
<div class="a" style="left:796px;top:405px;width:162px;height:18px;border:1px solid #707070;border-radius:3px;background:linear-gradient(#f3f3f3,#ebebeb 45%,#dddddd 50%,#cfcfcf)"></div>
<div class="t" style="left:796px;width:162px;text-align:center;top:408.84px;font-size:12px;color:#111">Abbrechen</div>
<div class="a" style="left:796px;top:440px;width:162px;height:18px;border:1px solid #707070;border-radius:3px;background:linear-gradient(#f3f3f3,#ebebeb 45%,#dddddd 50%,#cfcfcf)"></div>
<div class="t" style="left:796px;width:162px;text-align:center;top:443.84px;font-size:12px;color:#111">Zu Farbfeldern hinzufügen</div>
<div class="a" style="left:796px;top:475px;width:162px;height:18px;border:1px solid #707070;border-radius:3px;background:linear-gradient(#f3f3f3,#ebebeb 45%,#dddddd 50%,#cfcfcf)"></div>
<div class="t" style="left:796px;width:162px;text-align:center;top:478.84px;font-size:12px;color:#111">Farbbibliotheken</div>
<svg width="0" height="0" style="position:absolute"><defs><linearGradient id="rg" x1="0" y1="0" x2="1" y2="1"><stop offset="0" stop-color="#c8c8c8"/><stop offset="0.6" stop-color="#f4f4f4"/><stop offset="1" stop-color="#fff"/></linearGradient></defs></svg>
<svg class="a" style="left:695.5px;top:513.0px;" width="13" height="13" viewBox="0 0 13 13"><circle cx="6.5" cy="6.5" r="5.8" fill="url(#rg)" stroke="#8e8f8f" stroke-width="1"/><circle cx="6.5" cy="6.5" r="3.2" fill="#1c5a8c"/><circle cx="5.8" cy="5.6" r="1.3" fill="#9fd0ef"/></svg>
<div class="t" style="left:711px;top:514.34px;font-size:12px;color:#111">H:</div>
<div class="a" style="left:731px;top:510px;width:32px;height:20px;background:#fff;border:1px solid #e3e3e3;border-top-color:#d6d6d6"></div>
<div class="t" style="left:737px;top:514.84px;font-size:12px;color:#111">0</div>
<div class="t" style="left:767px;top:511.34px;font-size:12px;color:#111">°</div>
<svg class="a" style="left:695.5px;top:539.5px;" width="13" height="13" viewBox="0 0 13 13"><circle cx="6.5" cy="6.5" r="5.8" fill="url(#rg)" stroke="#8e8f8f" stroke-width="1"/></svg>
<div class="t" style="left:711px;top:540.84px;font-size:12px;color:#111">S:</div>
<div class="a" style="left:731px;top:536px;width:32px;height:20px;background:#fff;border:1px solid #e3e3e3;border-top-color:#d6d6d6"></div>
<div class="t" style="left:737px;top:540.84px;font-size:12px;color:#111">0</div>
<div class="t" style="left:766px;top:540.84px;font-size:12px;color:#111">%</div>
<svg class="a" style="left:695.5px;top:565.1px;" width="13" height="13" viewBox="0 0 13 13"><circle cx="6.5" cy="6.5" r="5.8" fill="url(#rg)" stroke="#8e8f8f" stroke-width="1"/></svg>
<div class="t" style="left:711px;top:566.44px;font-size:12px;color:#111">B:</div>
<div class="a" style="left:731px;top:562px;width:32px;height:20px;background:#fff;border:1px solid #e3e3e3;border-top-color:#d6d6d6"></div>
<div class="t" style="left:737px;top:566.84px;font-size:12px;color:#111">47</div>
<div class="t" style="left:766px;top:566.44px;font-size:12px;color:#111">%</div>
<svg class="a" style="left:695.5px;top:595.0px;" width="13" height="13" viewBox="0 0 13 13"><circle cx="6.5" cy="6.5" r="5.8" fill="url(#rg)" stroke="#8e8f8f" stroke-width="1"/></svg>
<div class="t" style="left:711px;top:596.34px;font-size:12px;color:#111">R:</div>
<div class="a" style="left:731px;top:592px;width:32px;height:20px;background:#fff;border:1px solid #e3e3e3;border-top-color:#d6d6d6"></div>
<div class="t" style="left:737px;top:596.84px;font-size:12px;color:#111">119</div>
<svg class="a" style="left:695.5px;top:621.0px;" width="13" height="13" viewBox="0 0 13 13"><circle cx="6.5" cy="6.5" r="5.8" fill="url(#rg)" stroke="#8e8f8f" stroke-width="1"/></svg>
<div class="t" style="left:711px;top:622.34px;font-size:12px;color:#111">G:</div>
<div class="a" style="left:731px;top:618px;width:32px;height:20px;background:#fff;border:1px solid #e3e3e3;border-top-color:#d6d6d6"></div>
<div class="t" style="left:737px;top:622.84px;font-size:12px;color:#111">119</div>
<svg class="a" style="left:695.5px;top:646.8px;" width="13" height="13" viewBox="0 0 13 13"><circle cx="6.5" cy="6.5" r="5.8" fill="url(#rg)" stroke="#8e8f8f" stroke-width="1"/></svg>
<div class="t" style="left:711px;top:648.14px;font-size:12px;color:#111">B:</div>
<div class="a" style="left:731px;top:643px;width:32px;height:20px;background:#fff;border:1px solid #e3e3e3;border-top-color:#d6d6d6"></div>
<div class="t" style="left:737px;top:647.84px;font-size:12px;color:#111">119</div>
<svg class="a" style="left:830.5px;top:513.0px;" width="13" height="13" viewBox="0 0 13 13"><circle cx="6.5" cy="6.5" r="5.8" fill="url(#rg)" stroke="#8e8f8f" stroke-width="1"/></svg>
<div class="t" style="left:847px;top:514.34px;font-size:12px;color:#111">L:</div>
<div class="a" style="left:865px;top:510px;width:40px;height:20px;background:#fff;border:1px solid #e3e3e3;border-top-color:#d6d6d6"></div>
<div class="t" style="left:871px;top:514.84px;font-size:12px;color:#111">50</div>
<svg class="a" style="left:830.5px;top:539.5px;" width="13" height="13" viewBox="0 0 13 13"><circle cx="6.5" cy="6.5" r="5.8" fill="url(#rg)" stroke="#8e8f8f" stroke-width="1"/></svg>
<div class="t" style="left:847px;top:540.84px;font-size:12px;color:#111">a:</div>
<div class="a" style="left:865px;top:536px;width:40px;height:20px;background:#fff;border:1px solid #e3e3e3;border-top-color:#d6d6d6"></div>
<div class="t" style="left:871px;top:540.84px;font-size:12px;color:#111">0</div>
<svg class="a" style="left:830.5px;top:565.1px;" width="13" height="13" viewBox="0 0 13 13"><circle cx="6.5" cy="6.5" r="5.8" fill="url(#rg)" stroke="#8e8f8f" stroke-width="1"/></svg>
<div class="t" style="left:847px;top:566.44px;font-size:12px;color:#111">b:</div>
<div class="a" style="left:865px;top:562px;width:40px;height:20px;background:#fff;border:1px solid #e3e3e3;border-top-color:#d6d6d6"></div>
<div class="t" style="left:871px;top:566.84px;font-size:12px;color:#111">0</div>
<div class="t" style="left:849px;top:596.34px;font-size:12px;color:#111">C:</div>
<div class="a" style="left:865px;top:592px;width:32px;height:20px;background:#fff;border:1px solid #e3e3e3;border-top-color:#d6d6d6"></div>
<div class="t" style="left:871px;top:596.84px;font-size:12px;color:#111">52</div>
<div class="t" style="left:902px;top:596.34px;font-size:12px;color:#111">%</div>
<div class="t" style="left:847px;top:622.34px;font-size:12px;color:#111">M:</div>
<div class="a" style="left:865px;top:618px;width:32px;height:20px;background:#fff;border:1px solid #e3e3e3;border-top-color:#d6d6d6"></div>
<div class="t" style="left:871px;top:622.84px;font-size:12px;color:#111">41</div>
<div class="t" style="left:902px;top:622.34px;font-size:12px;color:#111">%</div>
<div class="t" style="left:849px;top:648.14px;font-size:12px;color:#111">Y:</div>
<div class="a" style="left:865px;top:643px;width:32px;height:20px;background:#fff;border:1px solid #e3e3e3;border-top-color:#d6d6d6"></div>
<div class="t" style="left:871px;top:647.84px;font-size:12px;color:#111">41</div>
<div class="t" style="left:902px;top:648.14px;font-size:12px;color:#111">%</div>
<div class="t" style="left:849px;top:673.84px;font-size:12px;color:#111">K:</div>
<div class="a" style="left:865px;top:669px;width:32px;height:20px;background:#fff;border:1px solid #e3e3e3;border-top-color:#d6d6d6"></div>
<div class="t" style="left:871px;top:673.84px;font-size:12px;color:#111">24</div>
<div class="t" style="left:902px;top:673.84px;font-size:12px;color:#111">%</div>
<div class="t" style="left:696px;top:677.84px;font-size:12px;color:#111">#</div>
<div class="a" style="left:710px;top:673px;width:55px;height:21px;background:#fff;border:1px solid #8aa0b8;border-left-color:#c0c8d0;border-bottom-color:#dfe6ee"></div>
<div class="t" style="left:714px;top:677.84px;font-size:12px;color:#111">777777</div>
<div class="a" style="left:757px;top:676px;width:1px;height:14px;background:#000"></div>
<div class="a" style="left:687px;top:664px;width:90px;height:35px;border:5px solid #f00;border-radius:2px"></div>
<div class="a" style="left:392px;top:663px;width:13px;height:13px;border:1px solid #8e8f8f;background:linear-gradient(135deg,#dcdcdc,#f8f8f8)"></div>
<div class="t" style="left:408px;top:664.84px;font-size:12px;color:#111">Nur Webfarben anzeigen</div>
<svg class="a" style="left:13px;top:98px;" width="20" height="16" viewBox="0 0 20 16"><path d="M1 1l0 12 3-3 2 4 1.5-0.8-2-4h4z" fill="#2a2a2a"/><path d="M13 8h7M16.5 4.5v7" stroke="#2a2a2a" stroke-width="1.3"/><path d="M16.5 3l-2 2h4zM16.5 13l-2-2h4zM11.5 8l2-2v4zM21.5 8l-2-2v4z" fill="#2a2a2a"/></svg>
<div class="a" style="left:15px;top:122px;width:15px;height:13px;border:1.5px dashed #2a2a2a"></div>
<svg class="a" style="left:32px;top:133px;" width="4" height="4" viewBox="0 0 4 4"><path d="M4 0v4h-4z" fill="#111"/></svg>
<svg class="a" style="left:13px;top:142px;" width="20" height="18" viewBox="0 0 20 18"><path d="M2 6l8-4 7 2-5 7-6 2zM6 13l1 4" fill="none" stroke="#2a2a2a" stroke-width="1.8"/></svg>
<svg class="a" style="left:32px;top:156px;" width="4" height="4" viewBox="0 0 4 4"><path d="M4 0v4h-4z" fill="#111"/></svg>
<svg class="a" style="left:13px;top:165px;" width="20" height="18" viewBox="0 0 20 18"><circle cx="8" cy="8" r="5" fill="none" stroke="#2a2a2a" stroke-width="1.2" stroke-dasharray="1.5 1.5"/><path d="M10 10l7 7" stroke="#2a2a2a" stroke-width="2.5"/></svg>
<svg class="a" style="left:32px;top:179px;" width="4" height="4" viewBox="0 0 4 4"><path d="M4 0v4h-4z" fill="#111"/></svg>
<svg class="a" style="left:13px;top:188px;" width="20" height="18" viewBox="0 0 20 18"><path d="M5 1v12h12M1 5h12v12" fill="none" stroke="#2a2a2a" stroke-width="2.4"/><path d="M16 2L3 15" stroke="#2a2a2a" stroke-width="1"/></svg>
<svg class="a" style="left:32px;top:202px;" width="4" height="4" viewBox="0 0 4 4"><path d="M4 0v4h-4z" fill="#111"/></svg>
<div class="a" style="left:10px;top:211px;width:26px;height:22px;border:1px solid #6a6a6a;border-radius:2px;background:linear-gradient(#b4b4b4,#c8c8c8);box-shadow:inset 1px 1px 2px rgba(0,0,0,0.35)"></div>
<svg class="a" style="left:14px;top:213px;" width="18" height="18" viewBox="0 0 18 18"><path d="M2.5 15.5l8-8" stroke="#222" stroke-width="3.6" stroke-linecap="round"/><path d="M3 15l7.3-7.3" stroke="#eee" stroke-width="1.5"/><path d="M9 6l3 3" stroke="#222" stroke-width="3"/><circle cx="13" cy="5" r="3" fill="#222"/></svg>
<svg class="a" style="left:32px;top:229px;" width="4" height="4" viewBox="0 0 4 4"><path d="M4 0v4h-4z" fill="#111"/></svg>
<div class="a" style="left:8px;top:235px;width:29px;height:1px;background:#a4a4a4"></div>
<div class="a" style="left:8px;top:236px;width:29px;height:1px;background:#eee"></div>
<svg class="a" style="left:11px;top:240px;" width="24" height="16" viewBox="0 0 24 16"><path d="M1 5h7M4.5 1.5v7" stroke="#2a2a2a" stroke-width="1.3"/><ellipse cx="15" cy="10" rx="7" ry="4.5" fill="#fff" stroke="#2a2a2a" stroke-width="1.6"/><circle cx="15" cy="10" r="2.7" fill="#2a2a2a"/></svg>
<svg class="a" style="left:32px;top:252px;" width="4" height="4" viewBox="0 0 4 4"><path d="M4 0v4h-4z" fill="#111"/></svg>
<svg class="a" style="left:12px;top:261px;" width="22" height="18" viewBox="0 0 22 18"><defs><linearGradient id="gb" x1="0" y1="0" x2="1" y2="1"><stop offset="0" stop-color="#888"/><stop offset="1" stop-color="#222"/></linearGradient></defs><path d="M20.5 2.5l-8.5 8" stroke="#444" stroke-width="3" stroke-linecap="round"/><path d="M11 10c2 1 2 3 1 4-2 2-6 3-9 2 1-1 2-2 3-4 1-2 3-3 5-2z" fill="url(#gb)"/></svg>
<svg class="a" style="left:32px;top:276px;" width="4" height="4" viewBox="0 0 4 4"><path d="M4 0v4h-4z" fill="#111"/></svg>
<svg class="a" style="left:13px;top:285px;" width="20" height="17" viewBox="0 0 20 17"><defs><linearGradient id="gs" x1="0" y1="0" x2="0" y2="1"><stop offset="0" stop-color="#777"/><stop offset="1" stop-color="#2a2a2a"/></linearGradient></defs><circle cx="10" cy="3.5" r="2.8" fill="#333"/><rect x="8" y="5" width="4" height="5" fill="#444"/><path d="M3 10h14l1 3H2z" fill="url(#gs)"/><rect x="2" y="13" width="16" height="3" fill="#333"/></svg>
<svg class="a" style="left:32px;top:299px;" width="4" height="4" viewBox="0 0 4 4"><path d="M4 0v4h-4z" fill="#111"/></svg>
<svg class="a" style="left:12px;top:308px;" width="22" height="18" viewBox="0 0 22 18"><path d="M3 12c2 0 4-1 5-3l2 2c-1 3-4 5-8 4z" fill="#333"/><path d="M9 10l8-8 1.5 1.5-8 8z" fill="#555"/><path d="M8 3a4 4 0 0 0-5 4" fill="none" stroke="#333" stroke-width="2"/><path d="M1 6l2.5 3 2-3z" fill="#333"/><path d="M19 7v2M19 11v2" stroke="#777"/></svg>
<svg class="a" style="left:32px;top:322px;" width="4" height="4" viewBox="0 0 4 4"><path d="M4 0v4h-4z" fill="#111"/></svg>
<svg class="a" style="left:13px;top:331px;" width="21" height="14" viewBox="0 0 21 14"><defs><linearGradient id="ge" x1="0" y1="0" x2="0" y2="1"><stop offset="0" stop-color="#8a8a8a"/><stop offset="1" stop-color="#444"/></linearGradient></defs><path d="M3 9l9-7h8l-9 7z" fill="#777"/><path d="M3 9h8v4H3z" fill="#3e3e3e"/><path d="M11 9l9-7v4l-9 7z" fill="#555"/></svg>
<svg class="a" style="left:32px;top:345px;" width="4" height="4" viewBox="0 0 4 4"><path d="M4 0v4h-4z" fill="#111"/></svg>
<svg class="a" style="left:13px;top:352px;" width="22" height="19" viewBox="0 0 22 19"><defs><linearGradient id="gk" x1="0" y1="0" x2="1" y2="1"><stop offset="0" stop-color="#cfcfcf"/><stop offset="1" stop-color="#3a3a3a"/></linearGradient></defs><path d="M8 8V4a2.5 2.5 0 0 1 5 0v5" fill="none" stroke="#333" stroke-width="1.3"/><path d="M3 11l6-5 8 6-5 5z" fill="url(#gk)" stroke="#333" stroke-width="1"/><path d="M17 12c1.5 1 2.5 3 1.5 5" stroke="#222" stroke-width="2" fill="none"/></svg>
<svg class="a" style="left:32px;top:368px;" width="4" height="4" viewBox="0 0 4 4"><path d="M4 0v4h-4z" fill="#111"/></svg>
<div class="a" style="left:2px;top:344px;width:40px;height:35px;border:5px solid #f00;border-radius:3px"></div>
<svg class="a" style="left:14px;top:379px;" width="16" height="16" viewBox="0 0 16 16"><defs><radialGradient id="gbl" cx="0.4" cy="0.35" r="0.7"><stop offset="0" stop-color="#c8c8c8"/><stop offset="1" stop-color="#555"/></radialGradient></defs><path d="M8 1.5c-2 3-5 6-5 8.5a5 5 0 0 0 10 0c0-2.5-3-5.5-5-8.5z" fill="url(#gbl)"/></svg>
<svg class="a" style="left:32px;top:391px;" width="4" height="4" viewBox="0 0 4 4"><path d="M4 0v4h-4z" fill="#111"/></svg>
<svg class="a" style="left:13px;top:401px;" width="20" height="18" viewBox="0 0 20 18"><defs><radialGradient id="gdo" cx="0.4" cy="0.35" r="0.7"><stop offset="0" stop-color="#888"/><stop offset="1" stop-color="#1a1a1a"/></radialGradient></defs><circle cx="7" cy="7" r="5.5" fill="url(#gdo)"/><path d="M11 11l5.5 5.5" stroke="#2a2a2a" stroke-width="2.2"/></svg>
<svg class="a" style="left:32px;top:414px;" width="4" height="4" viewBox="0 0 4 4"><path d="M4 0v4h-4z" fill="#111"/></svg>
<div class="a" style="left:8px;top:422px;width:29px;height:1px;background:#a4a4a4"></div>
<div class="a" style="left:8px;top:423px;width:29px;height:1px;background:#eee"></div>
<svg class="a" style="left:13px;top:427px;" width="20" height="18" viewBox="0 0 20 18"><path d="M3 16l2-7 7-6 4 4-6 7z" fill="#eee" stroke="#2a2a2a" stroke-width="1.6"/><path d="M3 16l5-5" stroke="#2a2a2a"/><path d="M13 2l4 4" stroke="#2a2a2a" stroke-width="2.5"/></svg>
<svg class="a" style="left:32px;top:441px;" width="4" height="4" viewBox="0 0 4 4"><path d="M4 0v4h-4z" fill="#111"/></svg>
<div class="t" style="left:15px;top:450.76px;font-size:18px;color:#333;font-family:'Liberation Serif'">T</div>
<svg class="a" style="left:32px;top:464px;" width="4" height="4" viewBox="0 0 4 4"><path d="M4 0v4h-4z" fill="#111"/></svg>
<svg class="a" style="left:15px;top:473px;" width="16" height="18" viewBox="0 0 16 18"><path d="M2 1v14l3.5-3.5 3 5 2-1-3-5h5z" fill="#fff" stroke="#2a2a2a" stroke-width="1.4"/></svg>
<svg class="a" style="left:32px;top:487px;" width="4" height="4" viewBox="0 0 4 4"><path d="M4 0v4h-4z" fill="#111"/></svg>
<svg class="a" style="left:13px;top:496px;" width="20" height="18" viewBox="0 0 20 18"><path d="M8 1l3 4 6-1-2 5 4 4-6 1-2 4-3-4-6 1 2-5-3-4 6-1z" fill="#555" stroke="#2a2a2a"/></svg>
<svg class="a" style="left:32px;top:510px;" width="4" height="4" viewBox="0 0 4 4"><path d="M4 0v4h-4z" fill="#111"/></svg>
<div class="a" style="left:8px;top:518px;width:29px;height:1px;background:#a4a4a4"></div>
<div class="a" style="left:8px;top:519px;width:29px;height:1px;background:#eee"></div>
<svg class="a" style="left:12px;top:523px;" width="22" height="18" viewBox="0 0 22 18"><circle cx="11" cy="7" r="5" fill="#fff" stroke="#2a2a2a" stroke-width="1.6"/><path d="M2 8c0 5 6 8 13 6" fill="none" stroke="#2a2a2a" stroke-width="2"/><path d="M15 11l3 3-4 2z" fill="#2a2a2a"/></svg>
<svg class="a" style="left:32px;top:537px;" width="4" height="4" viewBox="0 0 4 4"><path d="M4 0v4h-4z" fill="#111"/></svg>
<svg class="a" style="left:11px;top:546px;" width="24" height="18" viewBox="0 0 24 18"><ellipse cx="11" cy="9" rx="9" ry="5" fill="none" stroke="#2a2a2a" stroke-width="2"/><rect x="16" y="1" width="5" height="4" fill="#2a2a2a"/><path d="M4 13l4 2-4 2z" fill="#2a2a2a"/></svg>
<svg class="a" style="left:32px;top:560px;" width="4" height="4" viewBox="0 0 4 4"><path d="M4 0v4h-4z" fill="#111"/></svg>
<svg class="a" style="left:13px;top:569px;" width="20" height="18" viewBox="0 0 20 18"><path d="M4 10V5a1.2 1.2 0 0 1 2.4 0v4V3a1.2 1.2 0 0 1 2.4 0v6V3.5a1.2 1.2 0 0 1 2.4 0V9V5a1.2 1.2 0 0 1 2.4 0v7c0 3-2 5-5 5s-4-1-6-4l-2-3a1.2 1.2 0 0 1 2-1z" fill="#fff" stroke="#2a2a2a" stroke-width="1.3"/></svg>
<svg class="a" style="left:32px;top:583px;" width="4" height="4" viewBox="0 0 4 4"><path d="M4 0v4h-4z" fill="#111"/></svg>
<svg class="a" style="left:13px;top:592px;" width="20" height="18" viewBox="0 0 20 18"><circle cx="7.5" cy="7" r="5" fill="#fff" stroke="#2a2a2a" stroke-width="1.8"/><path d="M11 10.5l6 6" stroke="#2a2a2a" stroke-width="2.6"/></svg>
<div class="a" style="left:12px;top:620px;width:6px;height:6px;background:#fff;border:1px solid #333"></div>
<div class="a" style="left:9px;top:617px;width:7px;height:7px;background:#000"></div>
<svg class="a" style="left:26px;top:613px;" width="12" height="12" viewBox="0 0 12 12"><path d="M3 9V4h5" fill="none" stroke="#2a2a2a" stroke-width="1.3"/><path d="M6 2l3 2-3 2zM1 7l2 3 2-3z" fill="#2a2a2a"/><path d="M9 4v5H4" fill="none" stroke="#2a2a2a" stroke-width="1.3"/></svg>
<div class="a" style="left:18px;top:642px;width:20px;height:20px;background:#fff;border:1px solid #c6c6c6"></div>
<div class="a" style="left:8px;top:630px;width:18px;height:21px;background:#777;border:1px solid #fff;outline:1px solid #333"></div>
<div class="a" style="left:3px;top:625px;width:28px;height:31px;border:5px solid #f00;border-radius:3px"></div>
<div class="a" style="left:14px;top:669px;width:18px;height:14px;background:#fff;border:1px solid #222;border-right-width:2px;border-bottom-width:2px"></div>
<svg class="a" style="left:18px;top:671px;" width="10" height="10" viewBox="0 0 10 10"><circle cx="5" cy="5" r="3.8" fill="none" stroke="#222" stroke-width="1.4"/></svg>
<svg class="a" style="left:1853px;top:97px;" width="20" height="18" viewBox="0 0 20 18"><rect x="1" y="1" width="5" height="4" fill="#fff" stroke="#111"/><rect x="1" y="6.5" width="5" height="4" fill="#fff" stroke="#111"/><rect x="1" y="12" width="5" height="5" fill="#555"/><path d="M10 2h5c1 2 1 4-1 6c2 2 1 6-3 9" fill="none" stroke="#333" stroke-width="2.6"/></svg>
<svg class="a" style="left:1853px;top:130px;" width="18" height="14" viewBox="0 0 18 14"><rect x="1" y="1" width="16" height="12" fill="#f2f2f2" stroke="#111" stroke-width="1.4"/><path d="M4 3v8l9-4z" fill="#444"/></svg>
<svg class="a" style="left:1888px;top:99px;" width="20" height="16" viewBox="0 0 20 16"><path d="M1 9c0-5 6-8 11-7.5s7 3 6 5-4 0-5 2.5 2 4-3 5.5S1 14 1 9z" fill="#333"/><circle cx="5" cy="8.5" r="1.4" fill="#f4f4f4"/><circle cx="7.5" cy="12.5" r="1.4" fill="#f4f4f4"/><circle cx="11" cy="12.5" r="1.4" fill="#f4f4f4"/><circle cx="8" cy="4.5" r="1.4" fill="#f4f4f4"/><circle cx="12" cy="3.5" r="1.4" fill="#f4f4f4"/></svg>
<svg class="a" style="left:1889px;top:130px;" width="19" height="15" viewBox="0 0 19 15"><rect x="0.5" y="0.5" width="17" height="13" fill="#1a1a1a"/><rect x="2" y="2" width="3" height="3" fill="#333"/><rect x="6" y="2" width="3" height="3" fill="#555"/><rect x="10" y="2" width="3" height="3" fill="#777"/><rect x="14" y="2" width="3" height="3" fill="#999"/><rect x="2" y="6" width="3" height="3" fill="#444"/><rect x="6" y="6" width="3" height="3" fill="#888"/><rect x="10" y="6" width="3" height="3" fill="#666"/><rect x="14" y="6" width="3" height="3" fill="#ddd"/><rect x="2" y="10" width="3" height="3" fill="#777"/><rect x="6" y="10" width="3" height="3" fill="#bbb"/><rect x="10" y="10" width="3" height="3" fill="#eee"/><rect x="14" y="10" width="3" height="3" fill="#fff"/></svg>
<svg class="a" style="left:1891px;top:161px;" width="14" height="14" viewBox="0 0 14 14"><circle cx="7" cy="7" r="6" fill="#222"/><path d="M11.5 2.5L2.5 11.5A6 6 0 0 0 11.5 2.5z" fill="#eee"/></svg>
<svg class="a" style="left:1889px;top:188px;" width="18" height="20" viewBox="0 0 18 20"><rect x="5" y="11" width="8" height="8" fill="#fff" stroke="#111" stroke-width="1.5"/><path d="M7 11V4M11 11V6M9 11V3" stroke="#222" stroke-width="1.6"/><circle cx="5" cy="3" r="2" fill="#222"/><path d="M12 4l4-2v3z" fill="#222"/></svg>
<div class="a" style="left:1883px;top:228px;width:29px;height:27px;border:1px solid #555;border-radius:3px;background:linear-gradient(#8a8a8a,#a4a4a4);box-shadow:inset 1px 1px 2px rgba(0,0,0,0.4)"></div>
<svg class="a" style="left:1888px;top:233px;" width="20" height="16" viewBox="0 0 20 16"><path d="M1 9l9 5 9-5-9-4z" fill="#333"/><path d="M1 6l9-5 9 5-9 5z" fill="#e8e8e8" stroke="#333" stroke-width="1.2"/></svg>
<svg class="a" style="left:1888px;top:262px;" width="20" height="18" viewBox="0 0 20 18"><circle cx="8" cy="7" r="6" fill="#222"/><circle cx="12" cy="11" r="6" fill="#666"/><circle cx="7" cy="12" r="5" fill="#bbb" opacity="0.8"/><circle cx="8" cy="6" r="2" fill="#fff"/></svg>
<svg class="a" style="left:1889px;top:294px;" width="18" height="14" viewBox="0 0 18 14"><rect x="1" y="1" width="16" height="12" fill="#888" stroke="#111" stroke-width="1.5"/><circle cx="9" cy="7" r="4" fill="#fff"/></svg>
<svg class="a" style="left:1887px;top:322px;" width="22" height="18" viewBox="0 0 22 18"><path d="M5 3L2 16h18L17 3z" fill="none" stroke="#222" stroke-width="1.3"/><path d="M5 3h12" stroke="#222"/><rect x="3" y="1" width="4" height="4" fill="#fff" stroke="#111"/><rect x="15" y="1" width="4" height="4" fill="#222"/><rect x="0" y="14" width="4" height="4" fill="#fff" stroke="#111"/><rect x="18" y="14" width="4" height="4" fill="#fff" stroke="#111"/></svg>
<div class="t" style="left:1888px;top:367.61px;font-size:17px;color:#333">A</div>
<div class="a" style="left:1902px;top:366px;width:1px;height:18px;background:#111"></div>
<div class="t" style="left:1891px;top:398.61px;font-size:17px;color:#333;font-weight:bold">¶</div>
</body></html>
